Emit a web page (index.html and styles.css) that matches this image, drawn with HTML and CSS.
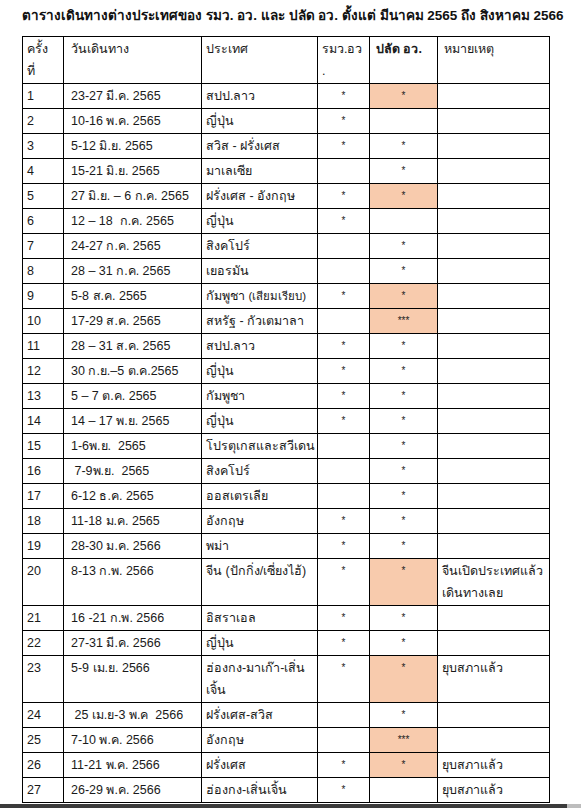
FILE: index.html
```html
<!DOCTYPE html>
<html lang="th">
<head>
<meta charset="utf-8">
<title>ตารางเดินทางต่างประเทศ</title>
<link rel="stylesheet" href="styles.css">
</head>
<body>
<div class="page">
  <h1 class="title">ตารางเดินทางต่างประเทศของ รมว. อว. และ ปลัด อว. ตั้งแต่ มีนาคม 2565 ถึง สิงหาคม 2566</h1>
  <table class="trips">
    <colgroup>
      <col class="c-no"><col class="c-date"><col class="c-country"><col class="c-min"><col class="c-ps"><col class="c-note">
    </colgroup>
    <thead>
      <tr><th>ครั้ง<br>ที่</th><th class="date">วันเดินทาง</th><th>ประเทศ</th><th>รมว.อว<br>.</th><th class="ps-head">ปลัด อว.</th><th class="note-head">หมายเหตุ</th></tr>
    </thead>
    <tbody>
      <tr><td>1</td><td class="date">23-27 มี.ค. 2565</td><td>สปป.ลาว</td><td class="mark">*</td><td class="mark hl">*</td><td></td></tr>
      <tr><td>2</td><td class="date">10-16 พ.ค. 2565</td><td>ญี่ปุ่น</td><td class="mark">*</td><td class="mark"></td><td></td></tr>
      <tr><td>3</td><td class="date">5-12 มิ.ย. 2565</td><td>สวิส - ฝรั่งเศส</td><td class="mark">*</td><td class="mark">*</td><td></td></tr>
      <tr><td>4</td><td class="date">15-21 มิ.ย. 2565</td><td>มาเลเซีย</td><td class="mark"></td><td class="mark">*</td><td></td></tr>
      <tr><td>5</td><td class="date">27 มิ.ย. – 6 ก.ค. 2565</td><td>ฝรั่งเศส - อังกฤษ</td><td class="mark">*</td><td class="mark hl">*</td><td></td></tr>
      <tr><td>6</td><td class="date">12 – 18&nbsp; ก.ค. 2565</td><td>ญี่ปุ่น</td><td class="mark">*</td><td class="mark"></td><td></td></tr>
      <tr><td>7</td><td class="date">24-27 ก.ค. 2565</td><td>สิงคโปร์</td><td class="mark"></td><td class="mark">*</td><td></td></tr>
      <tr><td>8</td><td class="date">28 – 31 ก.ค. 2565</td><td>เยอรมัน</td><td class="mark"></td><td class="mark">*</td><td></td></tr>
      <tr><td>9</td><td class="date">5-8 ส.ค. 2565</td><td>กัมพูชา <span class="small">(เสียมเรียบ)</span></td><td class="mark">*</td><td class="mark hl">*</td><td></td></tr>
      <tr><td>10</td><td class="date">17-29 ส.ค. 2565</td><td>สหรัฐ - กัวเตมาลา</td><td class="mark"></td><td class="mark hl">***</td><td></td></tr>
      <tr><td>11</td><td class="date">28 – 31 ส.ค. 2565</td><td>สปป.ลาว</td><td class="mark">*</td><td class="mark">*</td><td></td></tr>
      <tr><td>12</td><td class="date">30 ก.ย.–5 ต.ค.2565</td><td>ญี่ปุ่น</td><td class="mark">*</td><td class="mark">*</td><td></td></tr>
      <tr><td>13</td><td class="date">5 – 7 ต.ค. 2565</td><td>กัมพูชา</td><td class="mark">*</td><td class="mark">*</td><td></td></tr>
      <tr><td>14</td><td class="date">14 – 17 พ.ย. 2565</td><td>ญี่ปุ่น</td><td class="mark">*</td><td class="mark">*</td><td></td></tr>
      <tr><td>15</td><td class="date">1-6พ.ย.&nbsp; 2565</td><td>โปรตุเกสและสวีเดน</td><td class="mark"></td><td class="mark">*</td><td></td></tr>
      <tr><td>16</td><td class="date">&nbsp;7-9พ.ย.&nbsp; 2565</td><td>สิงคโปร์</td><td class="mark"></td><td class="mark">*</td><td></td></tr>
      <tr><td>17</td><td class="date">6-12 ธ.ค. 2565</td><td>ออสเตรเลีย</td><td class="mark"></td><td class="mark">*</td><td></td></tr>
      <tr><td>18</td><td class="date">11-18 ม.ค. 2565</td><td>อังกฤษ</td><td class="mark">*</td><td class="mark">*</td><td></td></tr>
      <tr><td>19</td><td class="date">28-30 ม.ค. 2566</td><td>พม่า</td><td class="mark">*</td><td class="mark">*</td><td></td></tr>
      <tr class="tall"><td>20</td><td class="date">8-13 ก.พ. 2566</td><td>จีน (ปักกิ่ง/เซี่ยงไฮ้)</td><td class="mark">*</td><td class="mark hl">*</td><td>จีนเปิดประเทศแล้ว<br>เดินทางเลย</td></tr>
      <tr><td>21</td><td class="date">16 -21 ก.พ. 2566</td><td>อิสราเอล</td><td class="mark">*</td><td class="mark">*</td><td></td></tr>
      <tr><td>22</td><td class="date">27-31 มี.ค. 2566</td><td>ญี่ปุ่น</td><td class="mark">*</td><td class="mark">*</td><td></td></tr>
      <tr class="tall"><td>23</td><td class="date">5-9 เม.ย. 2566</td><td>ฮ่องกง-มาเก๊า-เสิ่น<br>เจิ้น</td><td class="mark">*</td><td class="mark hl">*</td><td>ยุบสภาแล้ว</td></tr>
      <tr><td>24</td><td class="date">&nbsp;25 เม.ย-3 พ.ค&nbsp; 2566</td><td>ฝรั่งเศส-สวิส</td><td class="mark"></td><td class="mark">*</td><td></td></tr>
      <tr><td>25</td><td class="date">7-10 พ.ค. 2566</td><td>อังกฤษ</td><td class="mark"></td><td class="mark hl">***</td><td></td></tr>
      <tr><td>26</td><td class="date">11-21 พ.ค. 2566</td><td>ฝรั่งเศส</td><td class="mark">*</td><td class="mark hl">*</td><td>ยุบสภาแล้ว</td></tr>
      <tr><td>27</td><td class="date">26-29 พ.ค. 2566</td><td>ฮ่องกง-เสิ่นเจิ้น</td><td class="mark">*</td><td class="mark"></td><td>ยุบสภาแล้ว</td></tr>
    </tbody>
  </table>
</div>
<div class="edge"></div>
</body>
</html>
```
FILE: styles.css
```css
html, body {
  margin: 0;
  padding: 0;
  background: #ffffff;
}
body {
  width: 581px;
  height: 808px;
  overflow: hidden;
  display: flex;
  flex-direction: column;
  font-family: "Liberation Sans", Arial, sans-serif;
  color: #1a1a1a;
}
.page {
  flex: 1;
  padding: 6px 0 0 22px;
}
.title {
  margin: 0;
  font-size: 13.5px;
  line-height: 19px;
  font-weight: bold;
  color: #111;
  white-space: nowrap;
}
.trips {
  margin-top: 11px;
  border-collapse: collapse;
  table-layout: fixed;
  width: 527px;
  font-size: 12.5px;
}
.c-no { width: 41px; }
.c-date { width: 138px; }
.c-country { width: 116px; }
.c-min { width: 52px; }
.c-ps { width: 68px; }
.c-note { width: 112px; }
.trips th,
.trips td {
  border: 1px solid #000;
  padding: 1px 2px 1px 4px;
  height: 22px;
  line-height: 22px;
  vertical-align: top;
  text-align: left;
  font-weight: normal;
  white-space: nowrap;
  overflow: hidden;
}
.trips th {
  height: 44px;
}
.trips .date { padding-left: 7px; }
.trips .ps-head { font-weight: bold; padding-left: 6px; }
.trips .note-head { padding-left: 6px; }
.trips .mark {
  text-align: center;
  padding-left: 0;
  padding-right: 0;
  font-size: 10px;
  color: #222;
}
.trips .hl { background: #f8cbad; }
.trips .small { font-size: 11.5px; }
.trips tr.tall td { height: 44px; }
.edge {
  height: 4px;
  background: linear-gradient(to right, #3b3b3b 0, #3b3b3b 567px, #bdbdbd 567px);
}
```
